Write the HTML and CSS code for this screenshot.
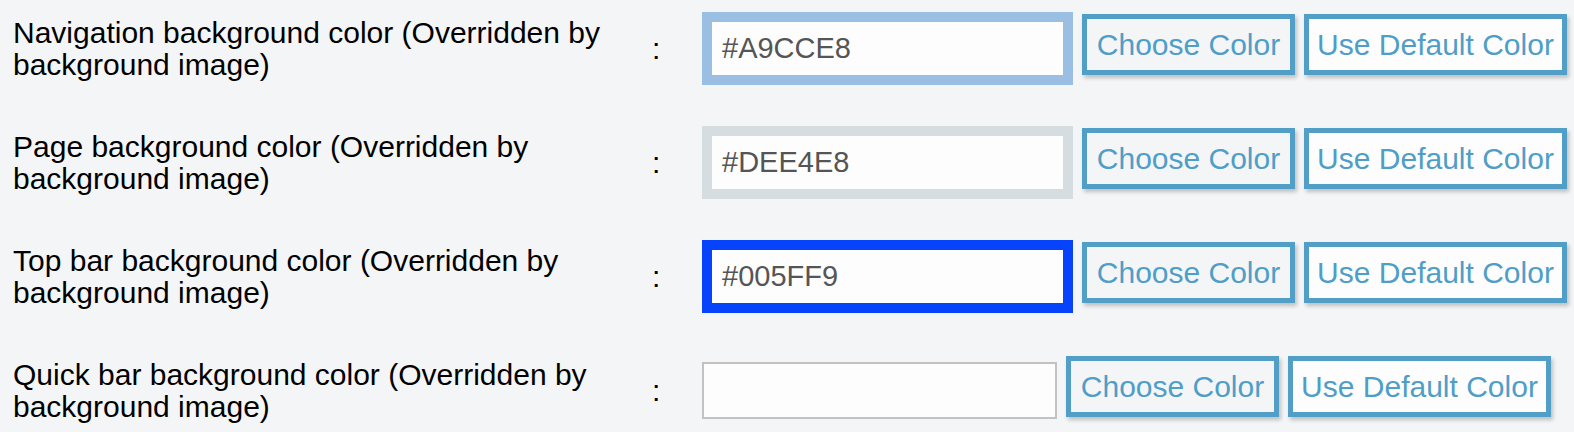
FILE: index.html
```html
<!DOCTYPE html>
<html>
<head>
<meta charset="utf-8">
<link rel="stylesheet" href="styles.css">
</head>
<body>
<div class="form">
  <div class="row">
    <div class="label">Navigation background color (Overridden by background image)</div>
    <div class="colon">:</div>
    <div class="field swatch nav">#A9CCE8</div>
    <div class="buttons">
      <button class="btn choose">Choose Color</button>
      <button class="btn default">Use Default Color</button>
    </div>
  </div>
  <div class="row">
    <div class="label">Page background color (Overridden by background image)</div>
    <div class="colon">:</div>
    <div class="field swatch page">#DEE4E8</div>
    <div class="buttons">
      <button class="btn choose">Choose Color</button>
      <button class="btn default">Use Default Color</button>
    </div>
  </div>
  <div class="row">
    <div class="label">Top bar background color (Overridden by background image)</div>
    <div class="colon">:</div>
    <div class="field swatch top">#005FF9</div>
    <div class="buttons">
      <button class="btn choose">Choose Color</button>
      <button class="btn default">Use Default Color</button>
    </div>
  </div>
  <div class="row">
    <div class="label">Quick bar background color (Overridden by background image)</div>
    <div class="colon">:</div>
    <div class="field empty"></div>
    <div class="buttons">
      <button class="btn choose">Choose Color</button>
      <button class="btn default">Use Default Color</button>
    </div>
  </div>
</div>
</body>
</html>
```

FILE: styles.css
```css
html, body {
  margin: 0;
  padding: 0;
  background: #f4f5f7;
}
body {
  font-family: "Liberation Sans", Arial, sans-serif;
  color: #000;
  overflow: hidden;
}
.form {
  display: flex;
  flex-direction: column;
  gap: 17px;
  padding-left: 13px;
}
.row {
  display: flex;
  align-items: center;
  height: 97px;
}
.label {
  width: 620px;
  font-size: 30px;
  line-height: 32px;
}
.colon {
  width: 50px;
  padding-left: 19px;
  font-size: 30px;
  line-height: 32px;
}
.field {
  box-sizing: border-box;
  width: 355px;
  height: 57px;
  background: #fdfdfd;
  border: 2px solid #c2c2c2;
  font-size: 29px;
  line-height: 53px;
  padding-left: 10px;
  color: #555;
}
.swatch {
  width: 371px;
  height: 73px;
  border-width: 10px;
}
.nav { border-color: #9abfe3; }
.page { border-color: #d5dde1; }
.top { border-color: #0743fa; }
.buttons {
  display: flex;
  gap: 9px;
  margin-left: 9px;
  margin-bottom: 8px;
}
.btn {
  box-sizing: border-box;
  height: 61px;
  padding: 0;
  border: 5px solid #519fc7;
  font-family: "Liberation Sans", Arial, sans-serif;
  font-size: 30px;
  white-space: nowrap;
  text-align: center;
  color: #4f9ec7;
  box-shadow: 2px 3px 4px rgba(0, 0, 0, 0.22);
  cursor: pointer;
}
.choose {
  width: 213px;
  background: #f4f5f7;
}
.default {
  width: 263px;
  background: #fdfdfd;
}
```
